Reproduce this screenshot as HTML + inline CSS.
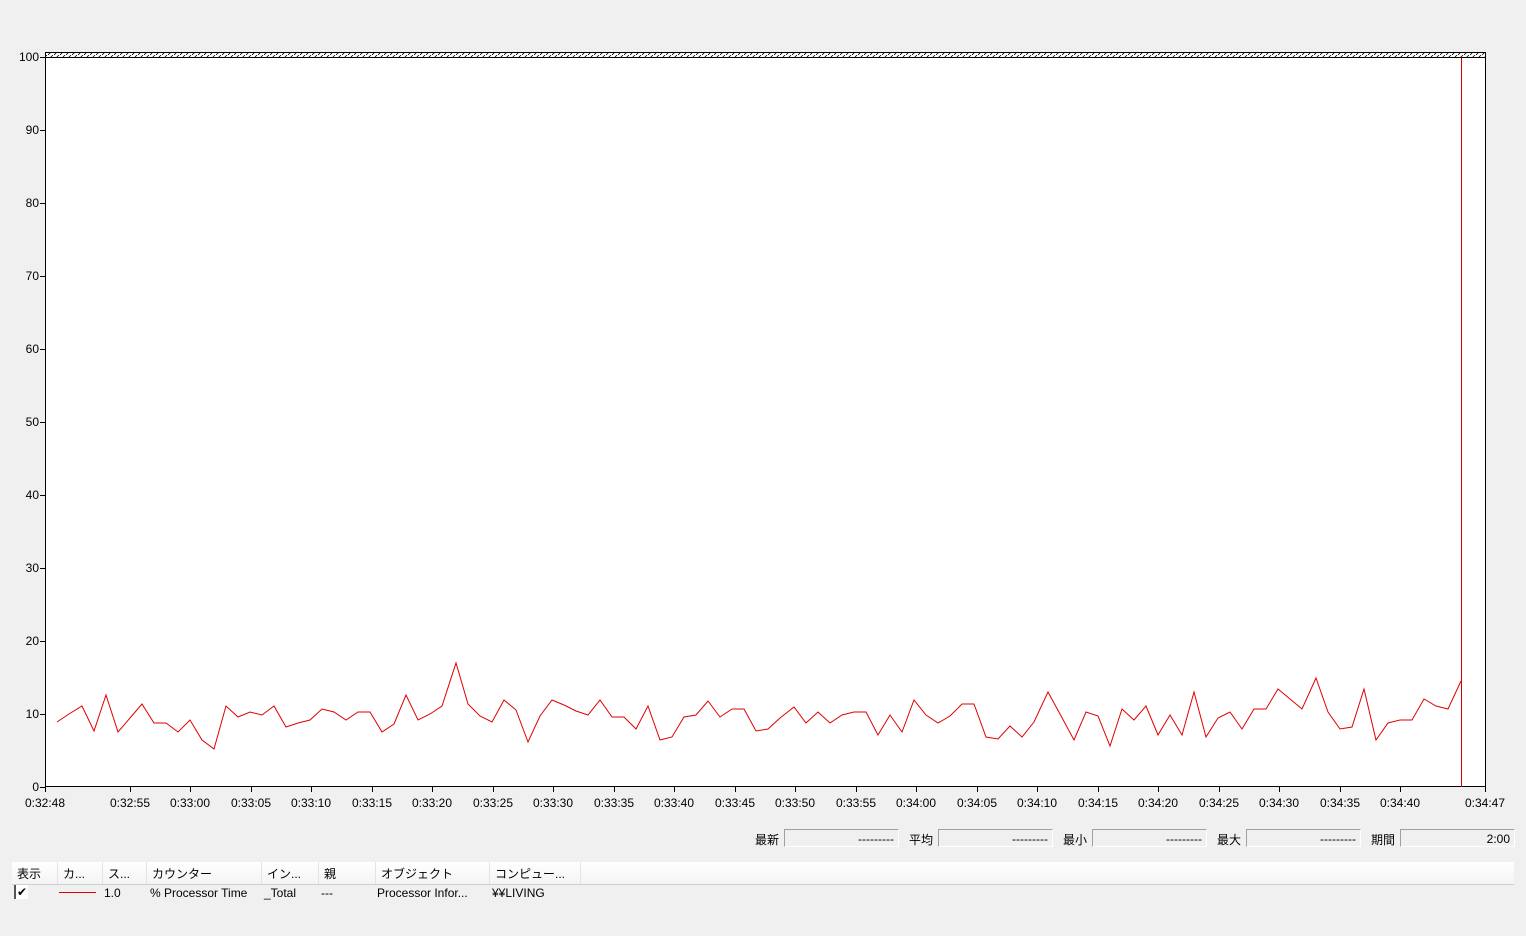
<!DOCTYPE html>
<html><head><meta charset="utf-8"><style>
body{margin:0;width:1526px;height:936px;background:#f0f0f0;font-family:"Liberation Sans","Noto Sans CJK JP",sans-serif;font-size:12px;color:#000;position:relative;overflow:hidden}
.a{position:absolute;white-space:nowrap}
.box{position:absolute;top:829px;height:18px;border:1px solid #a0a0a0;border-right-color:#fff;border-bottom-color:#fff;background:#f0f0f0;text-align:right;line-height:18px;box-sizing:border-box;padding-right:4px}
.hd{position:absolute;top:862px;height:22px;left:12px;width:1502px;background:linear-gradient(#fff,#f3f4f6);border-bottom:1px solid #d0d0d0}
.hd span{position:absolute;top:3px}
.sep{position:absolute;top:0;width:1px;height:22px;background:#e4e4e4}
</style></head><body>
<svg class="a" style="left:0;top:0" width="1526" height="820" font-family="Liberation Sans, sans-serif" font-size="12">
<defs><pattern id="h" width="6" height="5" patternUnits="userSpaceOnUse"><path d="M0 5 L5 0" stroke="#000" stroke-width="0.8"/></pattern></defs>
<rect x="45.5" y="52.5" width="1440" height="734" fill="#fff" stroke="#000"/>
<rect x="46" y="53" width="1439" height="4" fill="url(#h)"/>
<line x1="45" y1="57.5" x2="1485" y2="57.5" stroke="#000"/>
<g stroke="#000"><line x1="40" y1="57.5" x2="45" y2="57.5"/><line x1="40" y1="130.5" x2="45" y2="130.5"/><line x1="40" y1="203.5" x2="45" y2="203.5"/><line x1="40" y1="276.5" x2="45" y2="276.5"/><line x1="40" y1="349.5" x2="45" y2="349.5"/><line x1="40" y1="422.5" x2="45" y2="422.5"/><line x1="40" y1="495.5" x2="45" y2="495.5"/><line x1="40" y1="568.5" x2="45" y2="568.5"/><line x1="40" y1="641.5" x2="45" y2="641.5"/><line x1="40" y1="714.5" x2="45" y2="714.5"/><line x1="40" y1="787.5" x2="45" y2="787.5"/></g>
<g text-anchor="end"><text x="39" y="61">100</text><text x="39" y="134">90</text><text x="39" y="207">80</text><text x="39" y="280">70</text><text x="39" y="353">60</text><text x="39" y="426">50</text><text x="39" y="499">40</text><text x="39" y="572">30</text><text x="39" y="645">20</text><text x="39" y="718">10</text><text x="39" y="791">0</text></g>
<g stroke="#000"><line x1="45.5" y1="787" x2="45.5" y2="792"/><line x1="130.5" y1="787" x2="130.5" y2="792"/><line x1="190.5" y1="787" x2="190.5" y2="792"/><line x1="251.5" y1="787" x2="251.5" y2="792"/><line x1="311.5" y1="787" x2="311.5" y2="792"/><line x1="372.5" y1="787" x2="372.5" y2="792"/><line x1="432.5" y1="787" x2="432.5" y2="792"/><line x1="493.5" y1="787" x2="493.5" y2="792"/><line x1="553.5" y1="787" x2="553.5" y2="792"/><line x1="614.5" y1="787" x2="614.5" y2="792"/><line x1="674.5" y1="787" x2="674.5" y2="792"/><line x1="735.5" y1="787" x2="735.5" y2="792"/><line x1="795.5" y1="787" x2="795.5" y2="792"/><line x1="856.5" y1="787" x2="856.5" y2="792"/><line x1="916.5" y1="787" x2="916.5" y2="792"/><line x1="977.5" y1="787" x2="977.5" y2="792"/><line x1="1037.5" y1="787" x2="1037.5" y2="792"/><line x1="1098.5" y1="787" x2="1098.5" y2="792"/><line x1="1158.5" y1="787" x2="1158.5" y2="792"/><line x1="1219.5" y1="787" x2="1219.5" y2="792"/><line x1="1279.5" y1="787" x2="1279.5" y2="792"/><line x1="1340.5" y1="787" x2="1340.5" y2="792"/><line x1="1400.5" y1="787" x2="1400.5" y2="792"/><line x1="1485.5" y1="787" x2="1485.5" y2="792"/></g>
<g text-anchor="middle"><text x="45" y="807">0:32:48</text><text x="130" y="807">0:32:55</text><text x="190" y="807">0:33:00</text><text x="251" y="807">0:33:05</text><text x="311" y="807">0:33:10</text><text x="372" y="807">0:33:15</text><text x="432" y="807">0:33:20</text><text x="493" y="807">0:33:25</text><text x="553" y="807">0:33:30</text><text x="614" y="807">0:33:35</text><text x="674" y="807">0:33:40</text><text x="735" y="807">0:33:45</text><text x="795" y="807">0:33:50</text><text x="856" y="807">0:33:55</text><text x="916" y="807">0:34:00</text><text x="977" y="807">0:34:05</text><text x="1037" y="807">0:34:10</text><text x="1098" y="807">0:34:15</text><text x="1158" y="807">0:34:20</text><text x="1219" y="807">0:34:25</text><text x="1279" y="807">0:34:30</text><text x="1340" y="807">0:34:35</text><text x="1400" y="807">0:34:40</text><text x="1485" y="807">0:34:47</text></g>
<line x1="1461.5" y1="58" x2="1461.5" y2="787" stroke="#d00000"/>
<polyline fill="none" stroke="#e00000" stroke-width="1" points="57,722 69,714 82,706 94,731 106,695 118,732 130,718 142,704 154,723 166,723 178,732 190,720 202,740 214,749 226,706 238,717 250,712 262,715 274,706 286,727 298,723 310,720 322,709 334,712 346,720 358,712 370,712 382,732 394,724 406,695 418,720 430,714 442,706 456,663 468,704 480,716 492,722 504,700 516,710 528,742 540,716 552,700 564,705 576,711 588,715 600,700 612,717 624,717 636,729 648,706 660,740 672,737 684,717 696,715 708,701 720,717 732,709 744,709 756,731 768,729 780,718 794,707 806,723 818,712 830,723 842,715 854,712 866,712 878,735 890,715 902,732 914,700 926,715 938,723 950,716 962,704 974,704 986,737 998,739 1010,726 1022,737 1034,722 1048,692 1060,714 1074,740 1086,712 1098,716 1110,746 1122,709 1134,720 1146,706 1158,735 1170,715 1182,735 1194,692 1206,737 1218,718 1230,712 1242,729 1254,709 1266,709 1278,689 1290,699 1302,709 1316,678 1328,712 1340,729 1352,727 1364,689 1376,740 1388,723 1400,720 1412,720 1424,699 1436,706 1448,709 1461,681"/>
</svg>
<span class="a" style="left:755px;top:831px">最新</span><div class="box" style="left:784px;width:115px">---------</div>
<span class="a" style="left:909px;top:831px">平均</span><div class="box" style="left:938px;width:115px">---------</div>
<span class="a" style="left:1063px;top:831px">最小</span><div class="box" style="left:1092px;width:115px">---------</div>
<span class="a" style="left:1217px;top:831px">最大</span><div class="box" style="left:1246px;width:115px">---------</div>
<span class="a" style="left:1371px;top:831px">期間</span><div class="box" style="left:1400px;width:115px">2:00</div>
<div class="hd">
<span style="left:5px">表示</span><div class="sep" style="left:45px"></div>
<span style="left:51px">カ...</span><div class="sep" style="left:90px"></div>
<span style="left:96px">ス...</span><div class="sep" style="left:134px"></div>
<span style="left:140px">カウンター</span><div class="sep" style="left:249px"></div>
<span style="left:255px">イン...</span><div class="sep" style="left:306px"></div>
<span style="left:312px">親</span><div class="sep" style="left:363px"></div>
<span style="left:369px">オブジェクト</span><div class="sep" style="left:477px"></div>
<span style="left:483px">コンピュー...</span><div class="sep" style="left:568px"></div>
</div>
<div class="a" style="left:14px;top:885px;width:14px;height:14px;background:#fff;border-left:2px solid #555;box-sizing:border-box;font-size:12px;line-height:14px;padding-left:1px">✔</div>
<div class="a" style="left:59px;top:892px;width:37px;height:1px;background:#e00000"></div>
<span class="a" style="left:104px;top:886px">1.0</span>
<span class="a" style="left:150px;top:886px">% Processor Time</span>
<span class="a" style="left:264px;top:886px">_Total</span>
<span class="a" style="left:321px;top:886px">---</span>
<span class="a" style="left:377px;top:886px">Processor Infor...</span>
<span class="a" style="left:492px;top:886px">¥¥LIVING</span>
</body></html>
